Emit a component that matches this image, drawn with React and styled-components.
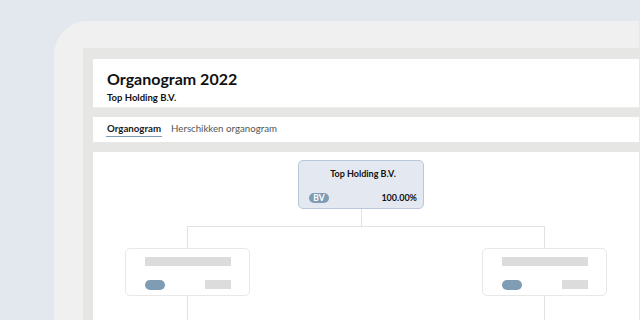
import React from "react";
import styled, { createGlobalStyle } from "styled-components";

const GlobalStyle = createGlobalStyle`
  html, body {
    margin: 0;
    padding: 0;
    background: #e3e7ee;
    overflow: hidden;
  }
  body {
    font-family: Lato, "Liberation Sans", sans-serif;
    color: #111;
  }
`;

const children = [{ id: "a" }, { id: "b" }];

const App = () => {
  return (
    <>
      <GlobalStyle />
      <Page>
        <Device>
          <Screen>
            <Header>
              <Title>Organogram 2022</Title>
              <Subtitle>Top Holding B.V.</Subtitle>
            </Header>
            <Tabs>
              <Tab active>Organogram</Tab>
              <Tab>Herschikken organogram</Tab>
            </Tabs>
            <Content>
              <RootNode>
                <NodeTitle>Top Holding B.V.</NodeTitle>
                <NodeFooter>
                  <TypePill>BV</TypePill>
                  <Percent>100.00%</Percent>
                </NodeFooter>
              </RootNode>
              <Stem />
              <Bracket />
              <ChildRow>
                {children.map((c) => (
                  <ChildColumn key={c.id}>
                    <ChildCard>
                      <Skeleton />
                      <ChildFooter>
                        <SkeletonPill />
                        <SkeletonValue />
                      </ChildFooter>
                    </ChildCard>
                    <DownLine />
                  </ChildColumn>
                ))}
              </ChildRow>
            </Content>
          </Screen>
        </Device>
      </Page>
    </>
  );
};

const Page = styled.div`
  width: 640px;
  height: 320px;
  padding: 21px 0 0 54px;
  box-sizing: border-box;
  overflow: hidden;
`;

const Device = styled.div`
  width: 585px;
  height: 299px;
  background: #f0f0f0;
  border-top-left-radius: 34px;
  padding: 27px 0 0 29px;
  box-sizing: border-box;
`;

const Screen = styled.div`
  height: 100%;
  background: #e6e6e4;
  padding: 11px 0 0 10px;
  box-sizing: border-box;
  display: flex;
  flex-direction: column;
  gap: 9px;
  overflow: hidden;
`;

const Header = styled.div`
  flex-shrink: 0;
  background: #fff;
  height: 49px;
  box-sizing: border-box;
  padding: 10px 0 0 14px;
  border-bottom: 1px solid #eeeeec;
`;

const Title = styled.div`
  font-size: 16px;
  font-weight: 700;
  letter-spacing: 0;
  line-height: 20px;
`;

const Subtitle = styled.div`
  font-size: 9.5px;
  font-weight: 700;
  line-height: 12px;
  margin-top: 3px;
`;

const Tabs = styled.div`
  flex-shrink: 0;
  background: #fff;
  height: 25px;
  box-sizing: border-box;
  display: flex;
  align-items: flex-start;
  gap: 8px;
  padding: 5px 0 0 13px;
  margin-bottom: 1px;
`;

const Tab = styled.div`
  font-size: 9.7px;
  line-height: 12px;
  font-weight: ${(p) => (p.active ? 700 : 400)};
  color: ${(p) => (p.active ? "#1a1a1a" : "#555555")};
  padding: 0 1px 2px;
  border-bottom: 1px solid ${(p) => (p.active ? "#7f9cb5" : "transparent")};
`;

const Content = styled.div`
  flex: 1;
  background: #fff;
  padding-top: 8px;
  display: flex;
  flex-direction: column;
  align-items: flex-start;
  overflow: hidden;
  & > * {
    flex-shrink: 0;
  }
`;

const RootNode = styled.div`
  margin-left: 205px;
  width: 126px;
  height: 49px;
  box-sizing: border-box;
  background: #e4e9f1;
  border: 1px solid #b8c8da;
  border-radius: 5px;
  display: flex;
  flex-direction: column;
  justify-content: space-between;
  padding: 7px 6px 5px 10px;
`;

const NodeTitle = styled.div`
  font-size: 9px;
  font-weight: 700;
  text-align: center;
  line-height: 11px;
`;

const NodeFooter = styled.div`
  display: flex;
  justify-content: space-between;
  align-items: center;
`;

const TypePill = styled.span`
  background: #7f9cb5;
  color: #fff;
  font-size: 8.5px;
  line-height: 10px;
  font-weight: 700;
  border-radius: 5px;
  width: 20px;
  text-align: center;
`;

const Percent = styled.span`
  font-size: 9px;
  font-weight: 700;
`;

const Stem = styled.div`
  margin-left: 268px;
  width: 1px;
  height: 17px;
  background: #e2e2e2;
`;

const Bracket = styled.div`
  margin-left: 94px;
  width: 358px;
  height: 22px;
  box-sizing: border-box;
  border: 1px solid #e2e2e2;
  border-bottom: none;
`;

const ChildRow = styled.div`
  display: flex;
  gap: 232px;
  margin-left: 32px;
`;

const ChildColumn = styled.div`
  display: flex;
  flex-direction: column;
  align-items: center;
`;

const ChildCard = styled.div`
  width: 125px;
  height: 48px;
  box-sizing: border-box;
  border: 1px solid #e8e8e8;
  border-radius: 5px;
  padding: 8px 18px 0 19px;
  display: flex;
  flex-direction: column;
  gap: 14px;
`;

const Skeleton = styled.div`
  height: 9px;
  background: #dcdcdc;
`;

const ChildFooter = styled.div`
  display: flex;
  justify-content: space-between;
  align-items: flex-start;
`;

const SkeletonPill = styled.div`
  width: 20px;
  height: 10px;
  border-radius: 5px;
  background: #7f9cb5;
`;

const SkeletonValue = styled.div`
  width: 26px;
  height: 9px;
  background: #dcdcdc;
`;

const DownLine = styled.div`
  width: 1px;
  height: 40px;
  background: #e2e2e2;
`;

export default App;
